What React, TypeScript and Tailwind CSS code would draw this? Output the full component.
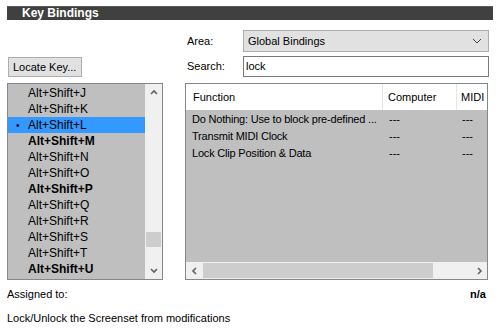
import React from 'react';

const keys = [
	{ k: 'J', bold: false },
	{ k: 'K', bold: false },
	{ k: 'L', bold: false, selected: true },
	{ k: 'M', bold: true },
	{ k: 'N', bold: false },
	{ k: 'O', bold: false },
	{ k: 'P', bold: true },
	{ k: 'Q', bold: false },
	{ k: 'R', bold: false },
	{ k: 'S', bold: false },
	{ k: 'T', bold: false },
	{ k: 'U', bold: true },
];

const functions = [
	'Do Nothing: Use to block pre-defined ...',
	'Transmit MIDI Clock',
	'Lock Clip Position & Data',
];

function Chevron({ dir, className }: { dir: 'up' | 'down' | 'left' | 'right'; className?: string }) {
	const paths = {
		up: 'M1 5 L4 2 L7 5',
		down: 'M1 2 L4 5 L7 2',
		left: 'M5 1 L2 4 L5 7',
		right: 'M3 1 L6 4 L3 7',
	};
	return (
		<svg width="8" height="8" viewBox="0 0 8 8" className={className}>
			<path d={paths[dir]} fill="none" stroke="#606060" strokeWidth="1.6" />
		</svg>
	);
}

export default function App() {
	return (
		<div className="relative h-[330px] w-[501px] overflow-hidden bg-white font-['Liberation_Sans',Arial,sans-serif] text-[11px] leading-[13px] text-black">
			<div className="ml-[7px] mt-[6px] h-[14px] w-[486px] border-t border-[#5a5a5a] bg-[#404040] pl-[15px] text-[12px] leading-[13px] font-bold text-white">
				Key Bindings
			</div>

			<div className="flex pl-[7px] pt-[10px]">
				{/* left column */}
				<div className="flex w-[156px] flex-col">
					<button className="ml-[1px] mt-[27px] h-[20px] w-[74px] whitespace-nowrap border border-[#adadad] bg-[#e1e1e1] pl-[4px] text-left text-[11px] leading-[18px]">
						Locate Key...
					</button>

					<div className="mt-[6px] flex h-[197px] w-[156px] border border-[#828790] bg-[#bfbfbf]">
						<div className="flex-1 pt-[1px]">
							{keys.map((r) => (
								<div
									key={r.k}
									className={`flex h-[16px] items-center whitespace-nowrap text-[12px] ${r.selected ? 'bg-[#3399ff]' : ''} ${r.bold ? 'font-bold' : ''}`}
								>
									<span className="w-[20px] pl-[8px] text-[10px]">{r.selected ? '•' : ''}</span>
									<span>Alt+Shift+{r.k}</span>
								</div>
							))}
						</div>
						<div className="flex w-[17px] flex-col items-center bg-[#f0f0f0]">
							<div className="flex h-[17px] items-center justify-center">
								<Chevron dir="up" />
							</div>
							<div className="mt-[131px] h-[15px] w-[15px] bg-[#cdcdcd]" />
							<div className="mt-auto flex h-[17px] items-center justify-center">
								<Chevron dir="down" />
							</div>
						</div>
					</div>
				</div>

				{/* right column */}
				<div className="ml-[22px] flex w-[304px] flex-col">
					<div className="flex items-center">
						<span className="w-[58px] pl-[2px]">Area:</span>
						<div className="flex h-[22px] flex-1 items-center justify-between border border-[#adadad] bg-[#e1e1e1] pl-[4px] pr-[6px]">
							<span>Global Bindings</span>
							<svg width="10" height="6" viewBox="0 0 10 6">
								<path d="M1 1 L5 5 L9 1" fill="none" stroke="#404040" strokeWidth="1" />
							</svg>
						</div>
					</div>
					<div className="mt-[4px] flex items-center">
						<span className="w-[58px] pl-[2px]">Search:</span>
						<div className="flex h-[21px] flex-1 items-center border border-[#7a7a7a] bg-white pl-[2px]">
							lock
						</div>
					</div>

					<div className="mt-[6px] flex h-[197px] w-[303px] flex-col border border-[#828790] bg-[#bfbfbf]">
						<div className="flex h-[26px] bg-white">
							<div className="flex w-[197px] items-center border-r border-[#e5e5e5] pl-[7px]">Function</div>
							<div className="flex w-[74px] items-center border-r border-[#e5e5e5] pl-[5px]">Computer</div>
							<div className="flex flex-1 items-center overflow-hidden whitespace-nowrap pl-[4px]">MIDI</div>
						</div>
						<div className="flex-1 pt-[1px]">
							{functions.map((f) => (
								<div key={f} className="flex h-[17px] items-center">
									<span className="w-[197px] overflow-hidden whitespace-nowrap pl-[6px] tracking-[-0.2px]">{f}</span>
									<span className="w-[74px] pl-[6px]">---</span>
									<span className="pl-[5px]">---</span>
								</div>
							))}
						</div>
						<div className="flex h-[17px] items-center bg-[#f0f0f0]">
							<div className="flex w-[17px] items-center justify-center">
								<Chevron dir="left" />
							</div>
							<div className="h-[15px] w-[230px] bg-[#cdcdcd]" />
							<div className="ml-auto flex w-[17px] items-center justify-center">
								<Chevron dir="right" />
							</div>
						</div>
					</div>
				</div>
			</div>

			<div className="mt-[8px] flex w-[486px] items-center justify-between pl-[7px]">
				<span>Assigned to:</span>
				<span className="font-bold">n/a</span>
			</div>
			<div className="mt-[11px] pl-[7px]">Lock/Unlock the Screenset from modifications</div>
		</div>
	);
}
